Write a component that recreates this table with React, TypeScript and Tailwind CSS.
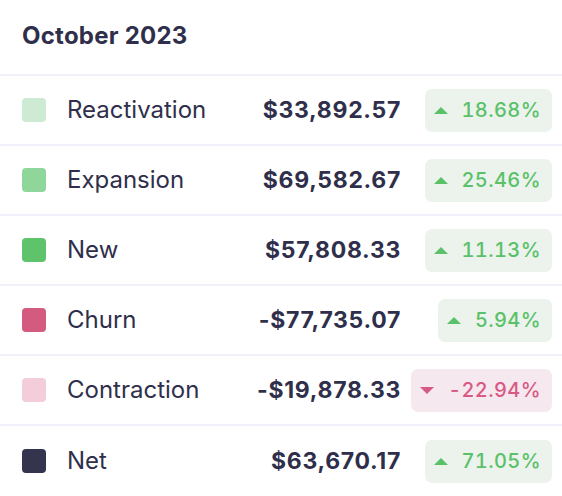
import React from "react";

type Row = {
  label: string;
  color: string;
  amount: string;
  change: string;
  up: boolean;
};

const rows: Row[] = [
  { label: "Reactivation", color: "bg-[#cdebd2]", amount: "$33,892.57", change: "18.68%", up: true },
  { label: "Expansion", color: "bg-[#8ed69a]", amount: "$69,582.67", change: "25.46%", up: true },
  { label: "New", color: "bg-[#5fc36b]", amount: "$57,808.33", change: "11.13%", up: true },
  { label: "Churn", color: "bg-[#d45b80]", amount: "-$77,735.07", change: "5.94%", up: true },
  { label: "Contraction", color: "bg-[#f3cdd9]", amount: "-$19,878.33", change: "-22.94%", up: false },
  { label: "Net", color: "bg-[#34344f]", amount: "$63,670.17", change: "71.05%", up: true },
];

function Badge({ change, up }: { change: string; up: boolean }) {
  return (
    <div
      className={
        "flex h-[43px] items-center gap-[14px] rounded-[7px] pl-[9px] pr-[11px] " +
        (up ? "bg-[#ebf3ec] text-[#5ac169]" : "bg-[#f5e9ef] text-[#d85a84]")
      }
    >
      <svg width="14" height="7" viewBox="0 0 14 7" className="shrink-0">
        {up ? (
          <path d="M7 0 L14 7 L0 7 Z" fill="currentColor" />
        ) : (
          <path d="M0 0 L14 0 L7 7 Z" fill="currentColor" />
        )}
      </svg>
      <span className="text-[20px] font-medium leading-none tracking-[0.02em] tabular-nums">{change}</span>
    </div>
  );
}

export default function App() {
  return (
    <div
      className="w-[562px] h-[496px] bg-white text-[#2f2f4b] overflow-hidden"
      style={{ fontFamily: "Inter, 'Noto Sans', sans-serif" }}
    >
      <div className="flex h-[76px] items-center border-b-2 border-[#f1effa] pl-[22px] pb-[2px]">
        <span className="text-[24px] font-bold leading-none tracking-[0.01em]">October 2023</span>
      </div>
      {rows.map((r, i) => (
        <div
          key={r.label}
          className={
            "grid h-[70px] grid-cols-[1fr_auto_151px] items-center pl-[22px] pr-[10px] " +
            (i < rows.length - 1 ? "border-b-2 border-[#f1effa]" : "")
          }
        >
          <div className="flex items-center gap-[21px]">
            <div className={"h-6 w-6 rounded-[4px] " + r.color} />
            <span className="text-[24px] font-normal leading-none">{r.label}</span>
          </div>
          <div className="text-right text-[23px] font-bold leading-none tracking-[0.03em]">{r.amount}</div>
          <div className="flex justify-end">
            <Badge change={r.change} up={r.up} />
          </div>
        </div>
      ))}
    </div>
  );
}
